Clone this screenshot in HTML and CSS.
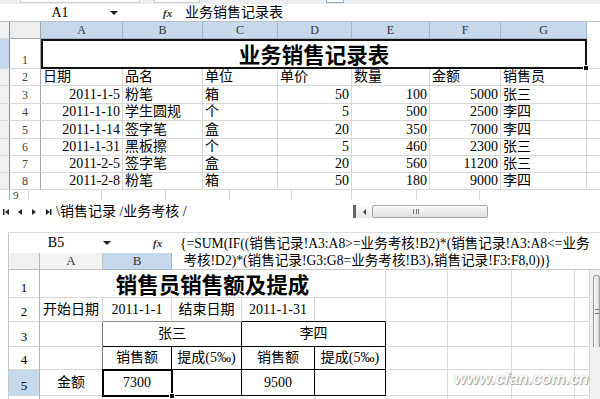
FILE: index.html
```html
<!DOCTYPE html>
<html>
<head>
    <title>业务销售记录表</title>
    <link rel="stylesheet" href="styles.css">
</head>
<body>
    <div class="ribbon"><span class="rb rb1"></span><span class="rb rb2"></span><span class="rb rb3"></span></div>

    <div class="fbar">
        <div class="namebox">A1</div>
        <span class="dd"></span>
        <span class="fx">fx</span>
        <div class="ftext">业务销售记录表</div>
    </div>

    <div class="sheet top-grid">
        <!-- column headers -->
        <div class="cell edge"></div>
        <div class="cell corner"></div>
        <div class="cell ch">A</div>
        <div class="cell ch">B</div>
        <div class="cell ch">C</div>
        <div class="cell ch">D</div>
        <div class="cell ch">E</div>
        <div class="cell ch">F</div>
        <div class="cell ch">G</div>
        <div class="cell rest-h"></div>

        <!-- row 1 -->
        <div class="cell edge on"></div>
        <div class="cell rh">1</div>
        <div class="cell title-top">业务销售记录表<span class="handle"></span></div>
        <div class="cell rest"></div>

        <div class="cell edge"></div>
        <div class="cell rh">2</div>
        <div class="cell">日期</div>
        <div class="cell">品名</div>
        <div class="cell">单位</div>
        <div class="cell">单价</div>
        <div class="cell">数量</div>
        <div class="cell">金额</div>
        <div class="cell">销售员</div>
        <div class="cell rest"></div>

        <div class="cell edge"></div>
        <div class="cell rh">3</div>
        <div class="cell num">2011-1-5</div>
        <div class="cell">粉笔</div>
        <div class="cell">箱</div>
        <div class="cell num">50</div>
        <div class="cell num">100</div>
        <div class="cell num">5000</div>
        <div class="cell">张三</div>
        <div class="cell rest"></div>

        <div class="cell edge"></div>
        <div class="cell rh">4</div>
        <div class="cell num">2011-1-10</div>
        <div class="cell">学生圆规</div>
        <div class="cell">个</div>
        <div class="cell num">5</div>
        <div class="cell num">500</div>
        <div class="cell num">2500</div>
        <div class="cell">李四</div>
        <div class="cell rest"></div>

        <div class="cell edge"></div>
        <div class="cell rh">5</div>
        <div class="cell num">2011-1-14</div>
        <div class="cell">签字笔</div>
        <div class="cell">盒</div>
        <div class="cell num">20</div>
        <div class="cell num">350</div>
        <div class="cell num">7000</div>
        <div class="cell">李四</div>
        <div class="cell rest"></div>

        <div class="cell edge"></div>
        <div class="cell rh">6</div>
        <div class="cell num">2011-1-31</div>
        <div class="cell">黑板擦</div>
        <div class="cell">个</div>
        <div class="cell num">5</div>
        <div class="cell num">460</div>
        <div class="cell num">2300</div>
        <div class="cell">张三</div>
        <div class="cell rest"></div>

        <div class="cell edge"></div>
        <div class="cell rh">7</div>
        <div class="cell num">2011-2-5</div>
        <div class="cell">签字笔</div>
        <div class="cell">盒</div>
        <div class="cell num">20</div>
        <div class="cell num">560</div>
        <div class="cell num">11200</div>
        <div class="cell">张三</div>
        <div class="cell rest"></div>

        <div class="cell edge"></div>
        <div class="cell rh">8</div>
        <div class="cell num">2011-2-8</div>
        <div class="cell">粉笔</div>
        <div class="cell">箱</div>
        <div class="cell num">50</div>
        <div class="cell num">180</div>
        <div class="cell num">9000</div>
        <div class="cell">李四</div>
        <div class="cell rest"></div>
    </div>

    <!-- row 9, only the top of it shows -->
    <div class="row9">
        <span class="r9 r9-edge"></span>
        <span class="r9 r9-rh">9</span>
        <span class="r9" style="width:73px"></span>
        <span class="r9" style="width:64px"></span>
        <span class="r9" style="width:64px"></span>
        <span class="r9" style="width:62px"></span>
        <span class="r9" style="width:60px"></span>
        <span class="r9" style="width:65px"></span>
        <span class="r9" style="width:63px"></span>
    </div>

    <div class="tabbar">
        <svg class="tabnav" width="52" height="18" viewBox="0 0 52 18">
            <rect x="3" y="9" width="1.5" height="6" fill="#222"/>
            <polygon points="9,9 9,15 5,12" fill="#222"/>
            <polygon points="22,9 22,15 18,12" fill="#222"/>
            <polygon points="32,9 32,15 36,12" fill="#222"/>
            <polygon points="46,9 46,15 50,12" fill="#222"/>
            <rect x="50" y="9" width="1.5" height="6" fill="#222"/>
        </svg>
        <div class="tabs">\<span class="tab-on">销售记录</span> /业务考核 /</div>
        <div class="hscroll">
            <span class="hs-split"></span>
            <span class="hs-btn"><span class="hs-arrow"></span></span>
            <span class="hs-thumb"><span class="grip-v"></span></span>
        </div>
    </div>

    <div class="sheet bottom-grid">
        <div class="nbar">
            <div class="namebox2">B5</div>
            <span class="dd"></span>
            <span class="fx fx2">fx</span>
        </div>
        <div class="fbox">
            <div class="fline">{=SUM(IF((销售记录!A3:A8&gt;=业务考核!B2)*(销售记录!A3:A8&lt;=业务</div>
            <div class="fline">&nbsp;考核!D2)*(销售记录!G3:G8=业务考核!B3),销售记录!F3:F8,0))}</div>
        </div>

        <div class="cell corner2"></div>
        <div class="cell ch2">A</div>
        <div class="cell ch2 ch2-on">B</div>

        <!-- row 1 -->
        <div class="cell rh2">1</div>
        <div class="cell title-bot">销售员销售额及提成</div>
        <div class="cell"></div>
        <div class="cell"></div>
        <div class="cell"></div>
        <div class="cell"></div>
        <div class="vscroll"><div class="thumb"><span class="grip-h"></span></div></div>

        <!-- row 2 -->
        <div class="cell rh2">2</div>
        <div class="cell mid">开始日期</div>
        <div class="cell mid bg">2011-1-1</div>
        <div class="cell mid bg">结束日期</div>
        <div class="cell mid bb">2011-1-31</div>
        <div class="cell bb"></div>
        <div class="cell"></div>
        <div class="cell"></div>
        <div class="cell"></div>
        <div class="cell"></div>

        <!-- row 3 -->
        <div class="cell rh2">3</div>
        <div class="cell rg"></div>
        <div class="cell mid bk span2">张三</div>
        <div class="cell mid bk span2">李四</div>
        <div class="cell"></div>
        <div class="cell"></div>
        <div class="cell"></div>
        <div class="cell"></div>

        <!-- row 4 -->
        <div class="cell rh2">4</div>
        <div class="cell rg"></div>
        <div class="cell mid bk">销售额</div>
        <div class="cell mid bk">提成(5‰)</div>
        <div class="cell mid bk">销售额</div>
        <div class="cell mid bk">提成(5‰)</div>
        <div class="cell"></div>
        <div class="cell"></div>
        <div class="cell"></div>
        <div class="cell"></div>

        <!-- row 5 -->
        <div class="cell rh2 rh2-on">5</div>
        <div class="cell mid rg">金额</div>
        <div class="cell mid bk sel">7300<span class="handle"></span></div>
        <div class="cell bk"></div>
        <div class="cell mid bk">9500</div>
        <div class="cell bk"></div>
        <div class="cell"></div>
        <div class="cell"></div>
        <div class="cell"></div>
        <div class="cell"></div>

        <!-- row 6, cut off by the window -->
        <div class="cell rh2"></div>
        <div class="cell"></div>
        <div class="cell"></div>
        <div class="cell"></div>
        <div class="cell"></div>
        <div class="cell"></div>
        <div class="cell"></div>
        <div class="cell"></div>
        <div class="cell"></div>
        <div class="cell"></div>
    </div>

    <div class="watermark">www.cfan.com.cn</div>
</body>
</html>
```

FILE: styles.css
```css
* {
    box-sizing: border-box;
}
body {
    margin: 0;
    width: 600px;
    height: 399px;
    overflow: hidden;
    position: relative;
    background: #fff;
    color: #000;
    font-family: "Liberation Serif", "Noto Sans CJK SC", serif;
    font-size: 14px;
}

/* bottom edge of the ribbon */
.ribbon {
    height: 4px;
    background: #eceef1;
    position: relative;
}
.rb {
    display: inline-block;
    height: 3px;
    vertical-align: top;
    background: #fff;
    border: 1px solid #c9ced6;
    border-top: none;
}
.rb1 { margin-left: 20px; width: 120px; }
.rb2 { margin-left: 14px; width: 46px; }
.rb3 { margin-left: 126px; width: 18px; border-color: #8fa9c9; }

/* formula bars */
.fbar {
    display: flex;
    align-items: center;
    height: 17px;
}
.namebox {
    width: 100px;
    margin-left: 10px;
    text-align: center;
    line-height: 17px;
}
.dd {
    width: 0;
    height: 0;
    border-left: 4px solid transparent;
    border-right: 4px solid transparent;
    border-top: 4px solid #222;
}
.fx {
    margin-left: 45px;
    width: 12px;
    font-style: italic;
    font-weight: bold;
    font-size: 11px;
    color: #333;
}
.ftext {
    margin-left: 10px;
    line-height: 17px;
}

/* sheets */
.sheet {
    display: grid;
}
.cell {
    display: flex;
    align-items: flex-end;
    padding: 0 2px;
    line-height: 16px;
    white-space: nowrap;
    overflow: hidden;
    border-right: 1px solid #d8d8d8;
    border-bottom: 1px solid #d8d8d8;
}
.num { justify-content: flex-end; }
.mid { justify-content: center; align-items: center; }

.top-grid {
    border-top: 1px solid #b9bec6;
    grid-template-columns: 10px 31px 82px 80px 75px 74px 78px 71px 86px 13px;
    grid-template-rows: 17px 30px 17px 18px 17px 18px 17px 17px 17px;
}
.edge {
    background: #eef0f3;
    border-right-color: #8c8c8c;
}
.edge.on { background: #c5d7ec; }
.corner {
    background: #eeeeee;
    border-color: #a6a6a6;
}
.ch {
    justify-content: center;
    align-items: center;
    background: #c6d8ec;
    border-color: #9fb6cf;
    font-size: 12px;
    color: #333;
}
.rest-h { border: none; }
.rest { border-right: none; }
.rh {
    justify-content: center;
    font-size: 12px;
    color: #444;
    border-right-color: #a6a6a6;
}
.title-top {
    grid-column: span 7;
    position: relative;
    overflow: visible;
    justify-content: center;
    border: 2px solid #111;
    font-family: "Noto Sans CJK SC", sans-serif;
    font-size: 21.5px;
    font-weight: bold;
    line-height: 27px;
}
.handle {
    position: absolute;
    right: -4px;
    bottom: -4px;
    width: 6px;
    height: 6px;
    background: #111;
    border: 1px solid #fff;
}

.row9 {
    display: flex;
    height: 10px;
    overflow: hidden;
}
.r9 {
    height: 10px;
    border-right: 1px solid #d8d8d8;
}
.r9-edge { width: 10px; border-right-color: #b0b0b0; }
.r9-rh {
    width: 19px;
    padding-left: 3px;
    font-size: 11px;
    line-height: 10px;
    color: #444;
}

/* sheet tabs and horizontal scroll */
.tabbar {
    display: flex;
    height: 18px;
}
.tabnav {
    flex: 0 0 52px;
}
.tabs {
    flex: 0 0 300px;
    padding-left: 4px;
    line-height: 23px;
    font-size: 14px;
}
.tab-on {
    background: #fff;
}
.hscroll {
    display: flex;
    margin-top: 5px;
    height: 13px;
}
.hs-split {
    width: 3px;
    background: #666;
    margin-left: 1px;
}
.hs-btn {
    width: 16px;
    display: flex;
    align-items: center;
    justify-content: center;
    background: linear-gradient(#fdfdfd, #e6e6e6);
}
.hs-arrow {
    width: 0;
    height: 0;
    border-top: 3px solid transparent;
    border-bottom: 3px solid transparent;
    border-right: 3px solid #444;
}
.hs-thumb {
    width: 116px;
    display: flex;
    align-items: center;
    padding-left: 40px;
    border: 1px solid #a8a8a8;
    border-radius: 2px;
    background: linear-gradient(#fafafa, #dedede);
}
.grip-v {
    width: 6px;
    height: 5px;
    border-left: 1px solid #777;
    border-right: 1px solid #777;
    position: relative;
}
.grip-v::after {
    content: "";
    position: absolute;
    left: 1.5px;
    top: 0;
    height: 5px;
    border-left: 1px solid #777;
}

/* second screenshot */
.bottom-grid {
    margin-top: 14px;
    margin-left: 8px;
    border-top: 1px solid #dcdcdc;
    border-left: 1px solid #c8c8c8;
    grid-template-columns: 31px 63px 69px 70px 73px 71px 62px 64px 63px 15px 10px;
    grid-template-rows: 20px 17px 28px 24px 25px 23px 26px 20px;
}
.nbar {
    grid-column: span 3;
    display: flex;
    align-items: center;
}
.namebox2 {
    width: 94px;
    text-align: center;
}
.fx2 {
    margin-left: 42px;
}
.fbox {
    grid-column: span 8;
    grid-row: span 2;
    padding: 2px 0 0 8px;
    font-size: 13.6px;
    line-height: 17px;
    background: #fff;
    border-bottom: 1px solid #c8c8c8;
    overflow: hidden;
}
.fline {
    white-space: nowrap;
}
.corner2 {
    background: #f0f0f0;
    border-color: #b8b8b8;
}
.ch2 {
    justify-content: center;
    align-items: center;
    background: #f3f3f3;
    border-color: #c2c2c2;
    font-size: 13px;
    color: #333;
}
.ch2-on {
    background: #c6d8ec;
    border-color: #9fb6cf;
}
.rh2 {
    justify-content: center;
    font-size: 13px;
    line-height: 18px;
    border-right-color: #b0b0b0;
}
.rh2-on { background: #c6d8ec; }
.title-bot {
    grid-column: span 5;
    overflow: visible;
    justify-content: center;
    align-items: center;
    font-family: "Noto Sans CJK SC", sans-serif;
    font-size: 21.5px;
    font-weight: bold;
    line-height: 26px;
}
.span2 { grid-column: span 2; }
.bk {
    border-right-color: #000;
    border-bottom-color: #000;
}
.bb { border-bottom-color: #000; }
.bg { border-bottom-color: #8a8a8a; }
.rg { border-right-color: #7a7a7a; }
.sel {
    position: relative;
    overflow: visible;
    outline: 2px solid #000;
    outline-offset: -1px;
    z-index: 1;
}

.vscroll {
    grid-row: span 6;
    padding: 5px 0 0 3px;
    background: #f0f0f0;
}
.thumb {
    height: 72px;
    display: flex;
    justify-content: center;
    padding-top: 33px;
    border: 1px solid #9a9a9a;
    border-bottom: none;
    border-radius: 3px 3px 0 0;
    background: linear-gradient(90deg, #fafafa, #dcdcdc);
}
.grip-h {
    width: 4px;
    height: 5px;
    border-top: 1px solid #777;
    border-bottom: 1px solid #777;
}

.watermark {
    position: absolute;
    left: 454px;
    top: 370px;
    font-family: "Liberation Sans", sans-serif;
    font-style: italic;
    font-weight: bold;
    font-size: 16px;
    color: #fff;
    text-shadow: 0 0 1px #888, 1px 1px 1px #999;
    opacity: 0.9;
}
```
